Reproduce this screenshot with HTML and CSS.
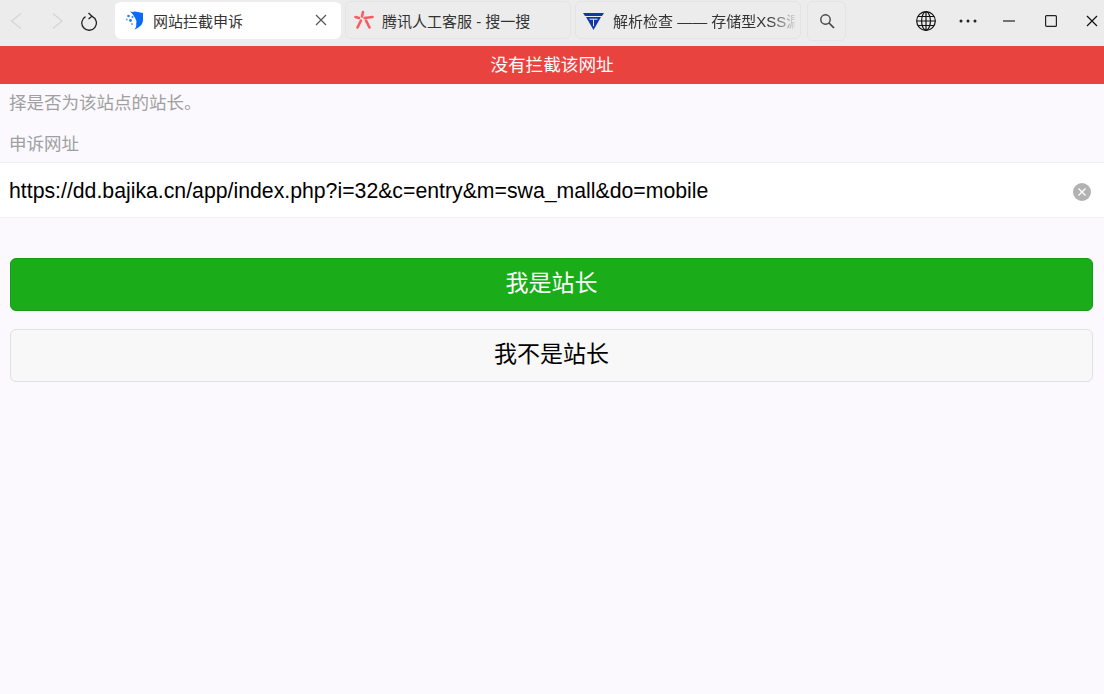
FILE: index.html
```html
<!DOCTYPE html>
<html lang="zh">
<head>
<meta charset="utf-8">
<title>网站拦截申诉</title>
<link rel="stylesheet" href="styles.css">
</head>
<body>
<header class="chrome">
  <div class="nav">
    <svg class="nav-icon" width="20" height="20" viewBox="0 0 20 20"><path d="M15 2.500 5.500 10 15 17.500" fill="none" stroke="#d6d6d6" stroke-width="1.400"/></svg>
    <svg class="nav-icon" width="20" height="20" viewBox="0 0 20 20"><path d="M7 2.500 16 10 7 17.500" fill="none" stroke="#d6d6d6" stroke-width="1.400"/></svg>
    <svg class="nav-icon reload" width="20" height="20" viewBox="0 0 20 20"><path d="M6.500 5.600a7.300 7.300 0 1 0 6.600-.300" fill="none" stroke="#222" stroke-width="1.300"/><path d="M9.500 2 13 5.300 9.500 8" fill="none" stroke="#222" stroke-width="1.300"/></svg>
  </div>
  <div class="tabs">
    <div class="tab active">
      <svg class="favicon" width="20" height="20" viewBox="1 0 20 20"><path d="M6 1.500c2 .6 3 .6 5 0l8 1.500v7c0 4.500-3.500 7.500-8.500 9.500 1.500-2 2-3.500 1.700-5-.2-1.500.8-2.500-.2-4.500C11 7.500 9 4 6 1.500Z" fill="#0b6bf6"/><circle cx="4.500" cy="6" r="1.300" fill="#2a7df0"/><circle cx="8.500" cy="7" r="1" fill="#2a7df0"/><circle cx="2.800" cy="9.500" r="1" fill="#6aa6f5"/><circle cx="6.500" cy="10.500" r="1.400" fill="#2a7df0"/><circle cx="8" cy="14" r="1" fill="#6aa6f5"/></svg>
      <span class="tab-title">网站拦截申诉</span>
      <svg class="tab-close" width="12" height="12" viewBox="0 0 12 12"><path d="M1 1 11 11M11 1 1 11" stroke="#555" stroke-width="1.200"/></svg>
    </div>
    <div class="tab">
      <svg class="favicon star" width="20" height="20" viewBox="0 0 20 20"><g stroke="#fa5a62" stroke-width="2.600" stroke-linecap="round"><path d="M8 2 7 6.500"/><path d="M.5 7 4 8"/><path d="M9.500 8 17.500 7"/><path d="M6 10.500 2.500 17.500"/><path d="M11 10.500 14.500 17.500"/></g></svg>
      <span class="tab-title">腾讯人工客服 - 搜一搜</span>
    </div>
    <div class="tab clip">
      <svg class="favicon wide" width="21" height="20" viewBox="0 0 21 20"><path d="M0 3h21l-2 3H2Z" fill="#1238a8"/><path d="M3 7h15l-7.500 13Z" fill="#1238a8"/><path d="M6.500 9.200h8M10.500 9.200v7" stroke="#e6ecfa" stroke-width="1"/></svg>
      <span class="tab-title fade">解析检查 —— 存储型XSS漏</span>
    </div>
    <div class="tab search">
      <svg width="18" height="18" viewBox="0 0 18 18"><circle cx="7.500" cy="7.500" r="4.700" fill="none" stroke="#444" stroke-width="1.400"/><path d="m11 11 5 5" stroke="#444" stroke-width="1.700"/></svg>
    </div>
  </div>
  <div class="win">
    <svg class="globe" width="22" height="22" viewBox="0 0 22 22"><g fill="none" stroke="#111" stroke-width="1.200"><circle cx="11" cy="11" r="9.300"/><ellipse cx="11" cy="11" rx="4.400" ry="9.300"/><path d="M11 1.700v18.600M1.700 11h18.600M3 6.500h16M3 15.500h16"/></g></svg>
    <svg class="more" width="18" height="4" viewBox="0 0 18 4"><circle cx="2" cy="2" r="1.500" fill="#222"/><circle cx="9" cy="2" r="1.500" fill="#222"/><circle cx="16" cy="2" r="1.500" fill="#222"/></svg>
    <svg class="min" width="12" height="12" viewBox="0 0 12 12"><path d="M0 6h12" stroke="#222" stroke-width="1.200"/></svg>
    <svg class="max" width="12" height="12" viewBox="0 0 12 12"><rect x=".6" y=".6" width="10.800" height="10.800" rx="1" fill="none" stroke="#222" stroke-width="1.200"/></svg>
    <svg class="x" width="12" height="12" viewBox="0 0 12 12"><path d="M1 1 11 11M11 1 1 11" stroke="#111" stroke-width="1.200"/></svg>
  </div>
</header>
<div class="toast">没有拦截该网址</div>
<main>
  <p class="hint">择是否为该站点的站长。</p>
  <p class="label">申诉网址</p>
  <div class="field">
    <span class="url">https://dd.bajika.cn/app/index.php?i=32&amp;c=entry&amp;m=swa_mall&amp;do=mobile</span>
    <svg class="clear" width="18" height="18" viewBox="0 0 18 18"><circle cx="9" cy="9" r="9" fill="#b2b2b2"/><path d="M5.500 5.500 12.500 12.500M12.500 5.500 5.500 12.500" stroke="#fff" stroke-width="1.300"/></svg>
  </div>
  <div class="actions">
    <button class="btn primary">我是站长</button>
    <button class="btn plain">我不是站长</button>
  </div>
</main>
</body>
</html>
```
FILE: styles.css
```css
* { box-sizing: border-box; }
html, body { margin: 0; height: 100%; }
body {
  background: #fbf9fe;
  font-family: "Liberation Sans", "Noto Sans CJK SC", sans-serif;
  overflow: hidden;
}
.chrome {
  height: 46px;
  padding-bottom: 6px;
  background: #ececec;
  display: flex;
  align-items: center;
  color: #333;
}
.nav {
  width: 115px;
  flex: none;
  display: flex;
  align-items: center;
  gap: 20px;
  padding: 2px 0 0 6px;
}
.reload { margin-left: -7px; }
.tabs { display: flex; gap: 4px; align-items: center; }
.tab {
  width: 226px;
  height: 38px;
  border: 1px solid #e4e4e4;
  border-radius: 6px;
  display: flex;
  align-items: center;
  padding: 0 13px 0 9px;
  gap: 8px;
  font-size: 15px;
  white-space: nowrap;
}
.tab.active { background: #fff; border-color: #ececec #fff #fff; }
.tab.clip { padding-right: 5px; }
.tab.search { width: 39px; height: 40px; justify-content: center; padding: 0; margin: 2px 0 0 2px; }
.favicon { flex: none; overflow: visible; }
.favicon.wide { margin: 0 1px 0 -2px; }
.favicon.star { margin-right: -1px; }
.tab-title { flex: 1; min-width: 0; }
.fade {
  -webkit-mask-image: linear-gradient(90deg, #000 86%, rgba(0,0,0,.1) 100%);
  mask-image: linear-gradient(90deg, #000 86%, rgba(0,0,0,.1) 100%);
  -webkit-mask-repeat: no-repeat;
  mask-repeat: no-repeat;
}
.win {
  flex: 1;
  display: flex;
  align-items: center;
  padding: 2px 0 0 69px;
}
.more { margin-left: 22px; }
.min { margin-left: 26px; }
.max { margin-left: 30px; }
.x { margin-left: 29px; }
.toast {
  height: 38px;
  line-height: 38px;
  background: #e94340;
  color: #fff;
  text-align: center;
  font-size: 17.6px;
}
.hint, .label {
  margin: 0;
  color: #a0a0a0;
  font-size: 17.5px;
  padding-left: 9px;
}
.hint { height: 36px; line-height: 38px; }
.label { height: 42px; line-height: 48px; }
.field {
  height: 56px;
  background: #fff;
  border-top: 1px solid #f0eff2;
  border-bottom: 1px solid #f0eff2;
  display: flex;
  align-items: center;
  justify-content: space-between;
  padding: 3px 13px 0 9px;
  font-size: 21.25px;
  color: #000;
}
.actions {
  padding: 40px 11px 0 10px;
  display: flex;
  flex-direction: column;
  gap: 18px;
}
.btn {
  height: 53px;
  width: 100%;
  border-radius: 6px;
  font-family: inherit;
  font-size: 23px;
  padding: 0 0 7px;
}
.primary { background: #1aad19; border: 1px solid #179b16; color: #fff; }
.plain { background: #f8f8f8; border: 1px solid #e0dfe2; color: #000; }
```
